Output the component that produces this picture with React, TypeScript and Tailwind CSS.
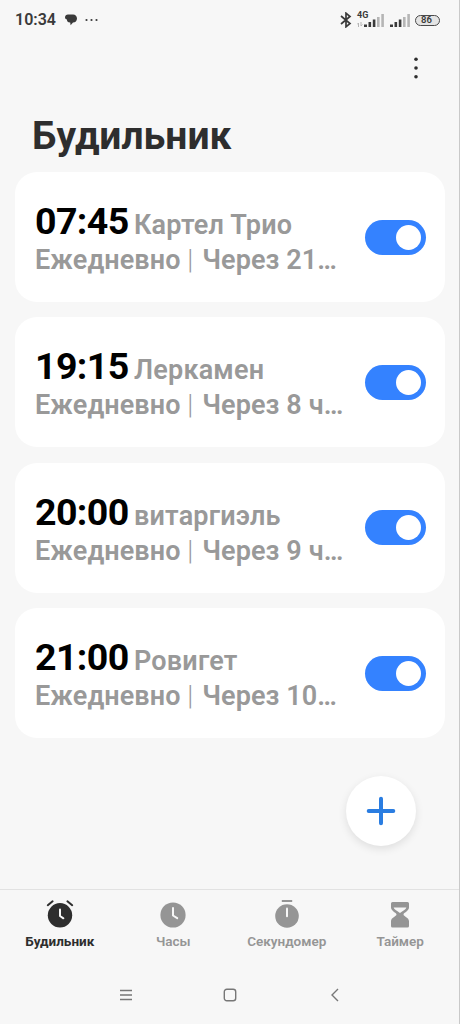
import { useState } from 'react'

type Alarm = { time: string; name: string; next: string }

const initialAlarms: Alarm[] = [
  { time: '07:45', name: 'Картел Трио', next: 'Через 21…' },
  { time: '19:15', name: 'Леркамен', next: 'Через 8 ч…' },
  { time: '20:00', name: 'витаргиэль', next: 'Через 9 ч…' },
  { time: '21:00', name: 'Ровигет', next: 'Через 10…' },
]

const tabs = [
  { id: 'alarm', label: 'Будильник', Icon: AlarmIcon },
  { id: 'clock', label: 'Часы', Icon: ClockIcon },
  { id: 'stopwatch', label: 'Секундомер', Icon: StopwatchIcon },
  { id: 'timer', label: 'Таймер', Icon: HourglassIcon },
]

function AlarmIcon() {
  return (
    <svg width="30" height="30" viewBox="0 0 30 30" fill="none">
      <circle cx="15" cy="16.3" r="12.2" fill="currentColor" />
      <path d="M2.8 6.2L7.6 2.3M27.2 6.2L22.4 2.3" stroke="currentColor" strokeWidth="2" strokeLinecap="round" />
      <path d="M15 10.5V17l3.4 2.3" stroke="#f7f7f7" strokeWidth="2" strokeLinecap="round" strokeLinejoin="round" />
    </svg>
  )
}

function ClockIcon() {
  return (
    <svg width="30" height="30" viewBox="0 0 30 30" fill="none">
      <circle cx="15" cy="16" r="12.6" fill="currentColor" />
      <path d="M15 9v7.5l4.2 2.6" stroke="#f7f7f7" strokeWidth="2" strokeLinecap="round" strokeLinejoin="round" />
    </svg>
  )
}

function StopwatchIcon() {
  return (
    <svg width="30" height="30" viewBox="0 0 30 30" fill="none">
      <circle cx="15" cy="17" r="11.8" fill="currentColor" />
      <path d="M9.8 2h10.4" stroke="currentColor" strokeWidth="2" />
      <path d="M15 9.6v7.6" stroke="#f7f7f7" strokeWidth="2" strokeLinecap="round" />
    </svg>
  )
}

function HourglassIcon() {
  return (
    <svg width="30" height="30" viewBox="0 0 30 30" fill="none">
      <path
        d="M7.500 3h15A1.500 1.500 0 0 1 24 4.500V8.500c0 3.700-5.500 5-5.500 7s5.500 3 5.500 6.700V27a1.500 1.500 0 0 1-1.500 1.500h-15A1.500 1.500 0 0 1 6 27v-4.800c0-3.700 5.500-4.700 5.500-6.700S6 12.200 6 8.500v-4A1.500 1.500 0 0 1 7.500 3z"
        fill="currentColor"
      />
      <path d="M8.600 8.600h12.800c-.6 2.200-3.600 3.100-6.400 5.400-2.800-2.300-5.800-3.200-6.400-5.400z" fill="#f7f7f7" />
    </svg>
  )
}

function Signal() {
  return (
    <svg width="21" height="14" viewBox="0 0 21 14">
      <g fill="#3a3a3a">
        <rect x="0" y="10.5" width="3" height="2.5" />
        <rect x="4.5" y="8" width="2.6" height="5" />
        <rect x="8.8" y="5.5" width="2.6" height="7.5" />
      </g>
      <g fill="#b5b5b5">
        <rect x="13" y="3" width="2.6" height="10" />
        <rect x="17.3" y="0" width="2.6" height="13" />
      </g>
    </svg>
  )
}

function StatusBar() {
  return (
    <div className="flex h-10 items-center justify-between pl-[15px] pr-[19px] text-[#3a3a3a]">
      <div className="flex items-center">
        <span className="w-[41px] whitespace-nowrap text-[16px] font-semibold leading-none">10:34</span>
        <svg className="ml-[9px]" width="12" height="12" viewBox="0 0 12 12" fill="#3a3a3a">
          <path d="M3 .5h5C10.5.5 12 2.2 12 4.5S10.4 8.6 8 8.6L5.6 11.3 5.2 8.5C2.4 8.4 1.8 7 2 5.5.6 5.2 0 4.2 0 3.2 0 1.7 1.3.5 3 .5z" />
        </svg>
        <svg className="ml-[8px]" width="14" height="4" viewBox="0 0 14 4" fill="#3a3a3a">
          <circle cx="1.5" cy="2" r="1.1" />
          <circle cx="6.5" cy="2" r="1.1" />
          <circle cx="11.5" cy="2" r="1.1" />
        </svg>
      </div>
      <div className="flex items-center">
        <svg width="12" height="16" viewBox="0 0 12 16" fill="none" stroke="#3a3a3a" strokeWidth="1.7">
          <path d="M1 4l9 7.5L6 14.8V1.2l4 3.3L1 12" />
        </svg>
        <div className="ml-[5px] flex h-[20px] w-[28px] flex-col">
          <span className="text-[9px] font-bold leading-[10px]">4G</span>
          <div className="-mt-[6px] flex items-end justify-end">
            <svg className="mb-px mr-px" width="6" height="5" viewBox="0 0 6 5" fill="none" stroke="#b5b5b5">
              <path d="M1.5 5V1L0 2.5M4 0v4l1.5-1.5" />
            </svg>
            <Signal />
          </div>
        </div>
        <div className="ml-[5px] mt-[1px]"><Signal /></div>
        <div className="ml-[4px] flex h-[11px] w-[25px] items-center justify-center rounded-full border border-[#4a4a4a] bg-[#e4e4e4] pr-[2px] text-[9.5px] font-semibold leading-none">
          86
        </div>
      </div>
    </div>
  )
}

function Toggle({ on, onChange }: { on: boolean; onChange: () => void }) {
  return (
    <button
      role="switch"
      aria-checked={on}
      onClick={onChange}
      className={`flex h-[35px] w-[61px] shrink-0 items-center rounded-full px-[5px] transition ${
        on ? 'justify-end bg-[#3482ff]' : 'justify-start bg-[#e0e0e0]'
      }`}
    >
      <span className="size-[25px] rounded-full bg-white" />
    </button>
  )
}

function AlarmCard({ alarm }: { alarm: Alarm }) {
  const [on, setOn] = useState(true)
  return (
    <div className="flex h-[130px] items-center justify-between rounded-[22px] bg-white pl-5 pr-[19px]">
      <div className="whitespace-nowrap pt-[3px] font-semibold text-[#999]">
        <div className="flex items-baseline gap-[5px] leading-[40px]">
          <span className="w-[94px] text-[37.5px] font-bold tracking-[-0.6px] text-black">{alarm.time}</span>
          <span className="text-[27px] tracking-[0.2px]">{alarm.name}</span>
        </div>
        <div className="text-[27px] leading-[31px] tracking-[0.1px]">
          Ежедневно <span className="mr-[2px] font-light">|</span> {alarm.next}
        </div>
      </div>
      <Toggle on={on} onChange={() => setOn(!on)} />
    </div>
  )
}

export default function App() {
  const [tab, setTab] = useState('alarm')

  return (
    <div className="relative flex h-[1024px] w-[460px] flex-col overflow-hidden border-r border-[#c9c9c9] bg-[#f7f7f7] font-['Roboto',sans-serif]">
      <StatusBar />

      {/* Header */}
      <div className="flex h-[56px] items-center justify-end pr-[40px]">
        <button aria-label="Меню">
          <svg width="6" height="24" viewBox="0 0 6 24" fill="#2e2e2e">
            <circle cx="3" cy="3.3" r="1.8" />
            <circle cx="3" cy="12" r="1.8" />
            <circle cx="3" cy="20.7" r="1.8" />
          </svg>
        </button>
      </div>
      <h1 className="h-[76px] pl-[32px] pt-[16px] text-[39px] font-bold leading-[48px] text-[#2e2e2e]">Будильник</h1>

      {/* Alarms */}
      <div className="flex flex-1 flex-col gap-[15.4px] pl-[15px] pr-[14px]">
        {initialAlarms.map((a) => <AlarmCard key={a.time} alarm={a} />)}
      </div>

      <button
        aria-label="Добавить"
        className="absolute left-[346px] top-[776px] flex size-[70px] items-center justify-center rounded-full bg-white shadow-[0_3px_8px_rgba(0,0,0,0.1)]"
      >
        <svg width="30" height="30" viewBox="0 0 30 30" fill="none" stroke="#2a7de1" strokeWidth="4" strokeLinecap="round">
          <path d="M15 2.7v24.6M2.7 15h24.6" />
        </svg>
      </button>

      {/* Tabs */}
      <div className="flex h-[71px] border-t border-[#e2e2e2] pl-[3px] pr-[2px] pt-[9px]">
        {tabs.map(({ id, label, Icon }) => (
          <button
            key={id}
            onClick={() => setTab(id)}
            className={`flex flex-1 flex-col items-center gap-[4px] text-[13.5px] leading-[17px] ${
              tab === id ? 'font-bold text-[#2e2e2e]' : 'font-semibold text-[#959595]'
            }`}
          >
            <Icon />
            {label}
          </button>
        ))}
      </div>

      {/* System navigation */}
      <div className="flex h-[64px] items-center justify-between pl-[119px] pr-[119px] pt-[6px]">
        <svg width="14" height="14" viewBox="0 0 14 14" stroke="#777" strokeWidth="1.3">
          <path d="M1 2.5h12M1 7h12M1 11.5h12" />
        </svg>
        <svg className="-ml-[4px]" width="14" height="14" viewBox="0 0 14 14" fill="none" stroke="#777" strokeWidth="1.4">
          <rect x="1.3" y="1.3" width="11.4" height="11.4" rx="2.5" />
        </svg>
        <svg width="10" height="14" viewBox="0 0 10 14" fill="none" stroke="#777" strokeWidth="1.4">
          <path d="M8 1L2 7l6 6" />
        </svg>
      </div>
    </div>
  )
}
